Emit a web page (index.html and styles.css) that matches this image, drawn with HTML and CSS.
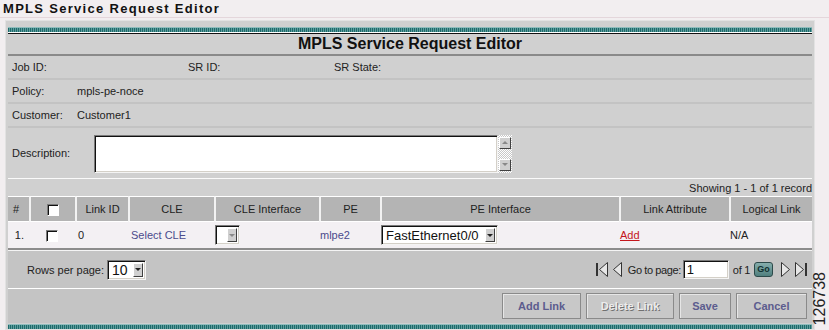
FILE: index.html
```html
<!DOCTYPE html>
<html lang="en">
<head>
  <meta charset="UTF-8">
  <title>MPLS Service Request Editor</title>
  <link rel="stylesheet" href="styles.css">
</head>
<body>
  <div class="page-title">MPLS Service Request Editor</div>

  <div class="panel">
    <div class="stripe"></div>
    <div class="editor-head">MPLS Service Request Editor</div>

    <!-- request details -->
    <div class="info-row">
      <span class="lbl w-job">Job ID:</span>
      <span class="lbl w-sr">SR ID:</span>
      <span class="lbl">SR State:</span>
    </div>
    <div class="info-row">
      <span class="lbl w-label">Policy:</span>
      <span class="val">mpls-pe-noce</span>
    </div>
    <div class="info-row">
      <span class="lbl w-label">Customer:</span>
      <span class="val">Customer1</span>
    </div>
    <div class="info-row desc-row">
      <span class="lbl w-desc">Description:</span>
      <div class="desc-box">
        <div class="desc-text sunken"></div>
        <div class="scrollbar">
          <span class="scroll-btn"><i class="tri-up"></i></span>
          <span class="scroll-track"></span>
          <span class="scroll-btn"><i class="tri-down"></i></span>
        </div>
      </div>
    </div>

    <div class="showing">Showing 1 - 1 of 1 record</div>

    <!-- links table -->
    <table class="links">
      <colgroup>
        <col style="width:21px"><col style="width:46px"><col style="width:53px">
        <col style="width:86px"><col style="width:105px"><col style="width:61px">
        <col style="width:239px"><col style="width:110px"><col style="width:83px">
      </colgroup>
      <thead>
        <tr>
          <th class="c-num">#</th>
          <th><span class="check"></span></th>
          <th>Link ID</th>
          <th>CLE</th>
          <th>CLE Interface</th>
          <th>PE</th>
          <th>PE Interface</th>
          <th>Link Attribute</th>
          <th>Logical Link</th>
        </tr>
      </thead>
      <tbody>
        <tr>
          <td class="c-num">1.</td>
          <td class="c-center"><span class="check"></span></td>
          <td>0</td>
          <td><a class="link" href="#">Select CLE</a></td>
          <td class="c-tight"><span class="combo disabled sunken"><span class="combo-val small"></span><span class="drop-btn"><i class="tri-down"></i></span></span></td>
          <td class="c-tight"><a class="link" href="#">mlpe2</a></td>
          <td class="c-tight"><span class="combo sunken"><span class="combo-val pe">FastEthernet0/0</span><span class="drop-btn"><i class="tri-down"></i></span></span></td>
          <td class="c-tight"><a class="add" href="#">Add</a></td>
          <td class="c-tight">N/A</td>
        </tr>
      </tbody>
    </table>

    <!-- paging -->
    <div class="pager">
      <div class="rows-per-page">
        Rows per page:
        <span class="combo sunken"><span class="combo-val rows">10</span><span class="drop-btn"><i class="tri-down"></i></span></span>
      </div>
      <div class="nav">
        <svg class="nav-ico" width="14" height="17" viewBox="0 0 14 17"><rect x="1" y="2" width="2" height="13" fill="#333"/><path d="M12.5 1.5 L4.5 8.5 L12.5 15.5 Z" fill="#e6e6e6" stroke="#333"/></svg>
        <svg class="nav-ico" width="11" height="17" viewBox="0 0 11 17"><path d="M9.5 1.5 L1.5 8.5 L9.5 15.5 Z" fill="#e6e6e6" stroke="#333"/></svg>
        <span class="goto">Go to page:</span>
        <span class="page-input sunken">1</span>
        <span class="of">of 1</span>
        <span class="go-btn">Go</span>
        <svg class="nav-ico" width="11" height="17" viewBox="0 0 11 17"><path d="M1.5 1.5 L9.5 8.5 L1.5 15.5 Z" fill="#e6e6e6" stroke="#333"/></svg>
        <svg class="nav-ico last" width="14" height="17" viewBox="0 0 14 17"><path d="M1.5 1.5 L9.5 8.5 L1.5 15.5 Z" fill="#e6e6e6" stroke="#333"/><rect x="11" y="2" width="2" height="13" fill="#333"/></svg>
      </div>
    </div>

    <!-- actions -->
    <div class="actions">
      <button class="btn w-add">Add Link</button>
      <button class="btn w-del" disabled>Delete Link</button>
      <button class="btn w-save">Save</button>
      <button class="btn w-cancel">Cancel</button>
    </div>
    <div class="stripe bottom"></div>
  </div>

  <div class="fig-no">126738</div>
</body>
</html>
```

FILE: styles.css
```css
/* base */
* {
  box-sizing: border-box;
}
body {
  margin: 0;
  padding: 0;
  background: #f2eef0;
  color: #222;
  font-family: 'Liberation Sans', Arial, sans-serif;
  font-size: 11px;
  overflow: hidden;
  position: relative;
  width: 829px;
  height: 330px;
}

.page-title {
  height: 18px;
  line-height: 17px;
  padding-left: 3px;
  font-size: 13px;
  font-weight: bold;
  letter-spacing: 1.3px;
  color: #111;
  border-bottom: 1px solid #e4d6db;
}

/* main frame */
.panel {
  width: 810px;
  margin: 2px 0 0 5px;
  padding: 6px 2px 0 2px;
  background: #d0d0d0;
  border: 1px solid #e2e2e2;
}

.stripe {
  height: 6px;
  background:
    linear-gradient(#8fbcbc, #8fbcbc) top / 100% 1px no-repeat,
    repeating-linear-gradient(90deg, #1d6b6c 0 1px, #5f9c9c 1px 2px);
  border-bottom: 1px solid #fff;
}
.stripe.bottom {
  height: 5px;
  margin-top: 1px;
  border-bottom: none;
}

.editor-head {
  height: 23px;
  line-height: 20px;
  border-top: 1px solid #111;
  border-bottom: 2px solid #8a8a8a;
  text-align: center;
  font-size: 16px;
  font-weight: bold;
  color: #111;
}

/* detail rows */
.info-row {
  display: flex;
  align-items: center;
  height: 24px;
  padding-left: 4px;
  border-bottom: 2px solid #c3c3c3;
}
.w-job { width: 176px; }
.w-sr { width: 146px; }
.w-label { width: 65px; }
.w-desc { width: 82px; }

.desc-row {
  height: 51px;
  border-bottom: 1px solid #fafafa;
}
.desc-box {
  display: flex;
  width: 418px;
  height: 38px;
  margin-top: 1px;
}
.desc-text {
  flex: 1;
}
.scrollbar {
  width: 14px;
  display: flex;
  flex-direction: column;
  background: repeating-conic-gradient(#fff 0 25%, #c8c8c8 0 50%) 0 0 / 2px 2px;
}
.scroll-btn {
  height: 12px;
  display: flex;
  align-items: center;
  justify-content: center;
  background: #cfcfcf;
  border: 1px solid;
  border-color: #fff #404040 #404040 #fff;
  margin: 2px 1px 0;
}
.scroll-btn:last-child {
  margin: 0 1px 2px;
}
.scroll-track {
  flex: 1;
}

.sunken {
  background: #fff;
  border: 1px solid;
  border-color: #7a7a7a #f4f4f4 #f4f4f4 #7a7a7a;
  box-shadow: inset 1px 1px 0 #111, inset -1px -1px 0 #d4d0c8;
}

.tri-down, .tri-up {
  display: block;
  width: 0;
  height: 0;
  border-left: 3px solid transparent;
  border-right: 3px solid transparent;
}
.tri-down { border-top: 3px solid #222; }
.tri-up { border-bottom: 3px solid #888; }
.scroll-btn .tri-down { border-top-color: #888; }

.showing {
  height: 17px;
  line-height: 19px;
  text-align: right;
  font-size: 11px;
}

/* table */
.links {
  width: 804px;
  table-layout: fixed;
  border-collapse: separate;
  border-spacing: 0;
}
.links th {
  height: 26px;
  padding: 0;
  background: #b4b4b4;
  font-weight: normal;
  text-align: center;
  border-top: 1px solid #fff;
  border-bottom: 1px solid #fff;
  border-left: 2px solid #f2f2f2;
  color: #222;
}
.links th:first-child {
  border-left: none;
}
.links th.c-num {
  text-align: left;
  padding-left: 5px;
}
.links td {
  height: 28px;
  padding: 0 3px;
  background: #f3f0f3;
  border-bottom: 2px solid #8c8c8c;
}
.links td.c-num {
  text-align: right;
  padding-right: 5px;
}
.links td.c-center {
  text-align: center;
}
.links td.c-tight {
  padding: 0 1px;
}

.check {
  display: inline-block;
  width: 12px;
  height: 12px;
  vertical-align: middle;
  background: #fff;
  border: 1px solid;
  border-color: #7a7a7a #fff #fff #7a7a7a;
  box-shadow: inset 1px 1px 0 #111;
}

.link {
  color: #4b4b8c;
  text-decoration: none;
}
.add {
  color: #c4161c;
}

/* dropdowns */
.combo {
  display: inline-flex;
  align-items: stretch;
  height: 20px;
  padding: 2px;
  vertical-align: middle;
}
.combo-val {
  display: flex;
  align-items: center;
  padding-left: 2px;
  font-size: 13px;
  color: #111;
}
.combo-val.small { width: 9px; }
.combo-val.pe { width: 101px; }
.combo-val.rows { width: 23px; font-size: 14px; }
.drop-btn {
  width: 10px;
  display: flex;
  align-items: center;
  justify-content: center;
  background: #d0d0d0;
  border: 1px solid;
  border-color: #fff #404040 #404040 #fff;
}
.combo.disabled .tri-down {
  border-top-color: #8a8a8a;
}

/* paging */
.pager {
  height: 39px;
  display: flex;
  align-items: center;
  justify-content: space-between;
  padding: 0 4px 0 19px;
  background: #c4c4c4;
  border-top: 1px solid #f4f4f4;
  border-bottom: 1px solid #fff;
  font-size: 11px;
}
.rows-per-page {
  display: flex;
  align-items: center;
  gap: 3px;
}
.nav {
  display: flex;
  align-items: center;
}
.nav-ico {
  display: block;
  margin-right: 3px;
}
.nav-ico.last {
  margin-right: 0;
}
.goto {
  margin: 0 2px 0 2px;
  letter-spacing: -0.4px;
}
.page-input {
  width: 46px;
  height: 19px;
  line-height: 17px;
  padding-left: 3px;
  font-size: 13px;
  color: #111;
}
.of {
  margin: 0 4px 0 4px;
  letter-spacing: -0.3px;
}
.go-btn {
  width: 19px;
  height: 15px;
  line-height: 13px;
  margin-right: 7px;
  text-align: center;
  font-size: 9px;
  font-weight: bold;
  color: #10302f;
  background: linear-gradient(#86aead, #4f7f7e);
  border: 1px solid #2c4a4a;
  border-radius: 3px;
}

/* buttons */
.actions {
  height: 34px;
  display: flex;
  align-items: center;
  justify-content: flex-end;
  gap: 5px;
  padding-right: 5px;
  background: #c4c4c4;
}
.btn {
  height: 26px;
  padding: 0;
  background: #c8c8c8;
  border: 1px solid #8a8a8a;
  box-shadow: inset 1px 1px 0 #e6e6e6;
  font-family: 'Liberation Sans', Arial, sans-serif;
  font-size: 11px;
  font-weight: bold;
  color: #5c5c8e;
}
.btn:disabled {
  color: #ececec;
  text-shadow: 1px 1px 0 #707070;
}
.w-add { width: 79px; }
.w-del { width: 88px; }
.w-save { width: 52px; }
.w-cancel { width: 71px; }

/* figure number at the right edge */
.fig-no {
  position: absolute;
  right: 0;
  top: 272px;
  writing-mode: vertical-rl;
  transform: rotate(180deg);
  font-size: 16px;
  color: #222;
}
```
